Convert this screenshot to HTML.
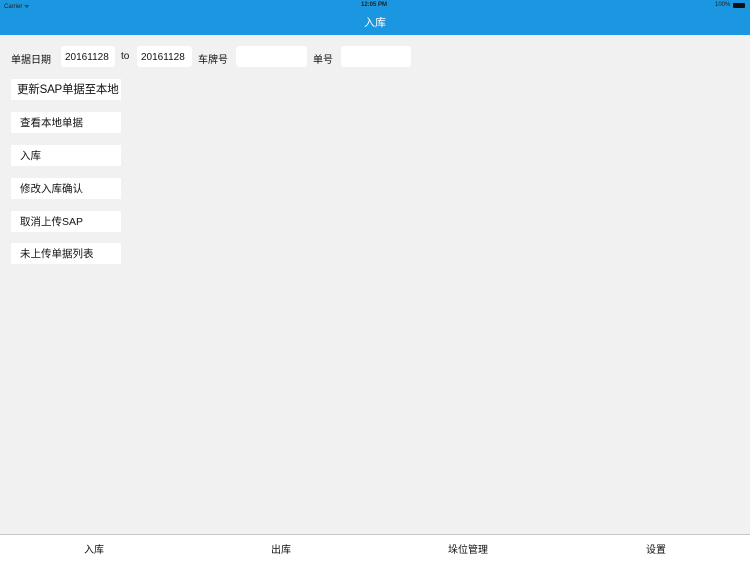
<!DOCTYPE html><html><head><meta charset="utf-8"><style>
body{margin:0;width:750px;height:562px;background:#f1f1f1;font-family:"Liberation Sans","Noto Sans CJK SC",sans-serif;position:relative;overflow:hidden;color:#111}
.a{position:absolute;white-space:nowrap}
.hd{position:absolute;left:0;top:0;width:750px;height:35px;background:#1a97e0}
.in{position:absolute;top:46px;height:21px;background:#fff;border-radius:3px;font-size:10px;line-height:23px;padding-left:4px;box-sizing:border-box}
.b{position:absolute;left:11px;width:110px;height:21px;background:#fff;font-size:10.5px;line-height:23px;padding-left:9px;box-sizing:border-box;white-space:nowrap;overflow:hidden}
.l{font-size:10px;top:51px}
.ft{position:absolute;left:0;top:534px;width:750px;height:28px;background:#fff;border-top:1px solid #c8c8c8}
.t{position:absolute;top:541px;font-size:10px;transform:translateX(-50%)}
</style></head><body>
<div class="hd"></div>
<div class="a" style="left:4px;top:2px;font-size:6px;color:#222">Carrier ᯤ</div>
<div class="a" style="left:361px;top:2px;font-size:6px;color:#222;font-weight:bold">12:05 PM</div>
<div class="a" style="left:715px;top:2px;font-size:6px;color:#222">100%</div>
<div class="a" style="left:733px;top:3px;width:12px;height:5px;background:#111;border-radius:1px"></div>
<div class="a" style="left:364px;top:14px;font-size:11px;color:#fff">入库</div>
<div class="a l" style="left:11px">单据日期</div>
<div class="in" style="left:61px;width:54px">20161128</div>
<div class="a l" style="left:121px">to</div>
<div class="in" style="left:137px;width:55px">20161128</div>
<div class="a l" style="left:198px">车牌号</div>
<div class="in" style="left:236px;width:71px"></div>
<div class="a l" style="left:313px">单号</div>
<div class="in" style="left:341px;width:70px"></div>
<div class="b" style="top:79px;font-size:11.5px;padding-left:6px;letter-spacing:-0.2px">更新SAP单据至本地</div>
<div class="b" style="top:112px">查看本地单据</div>
<div class="b" style="top:145px">入库</div>
<div class="b" style="top:178px">修改入库确认</div>
<div class="b" style="top:211px">取消上传SAP</div>
<div class="b" style="top:243px">未上传单据列表</div>
<div class="ft"></div>
<div class="t" style="left:94px">入库</div>
<div class="t" style="left:281px">出库</div>
<div class="t" style="left:468px">垛位管理</div>
<div class="t" style="left:656px">设置</div>
</body></html>
